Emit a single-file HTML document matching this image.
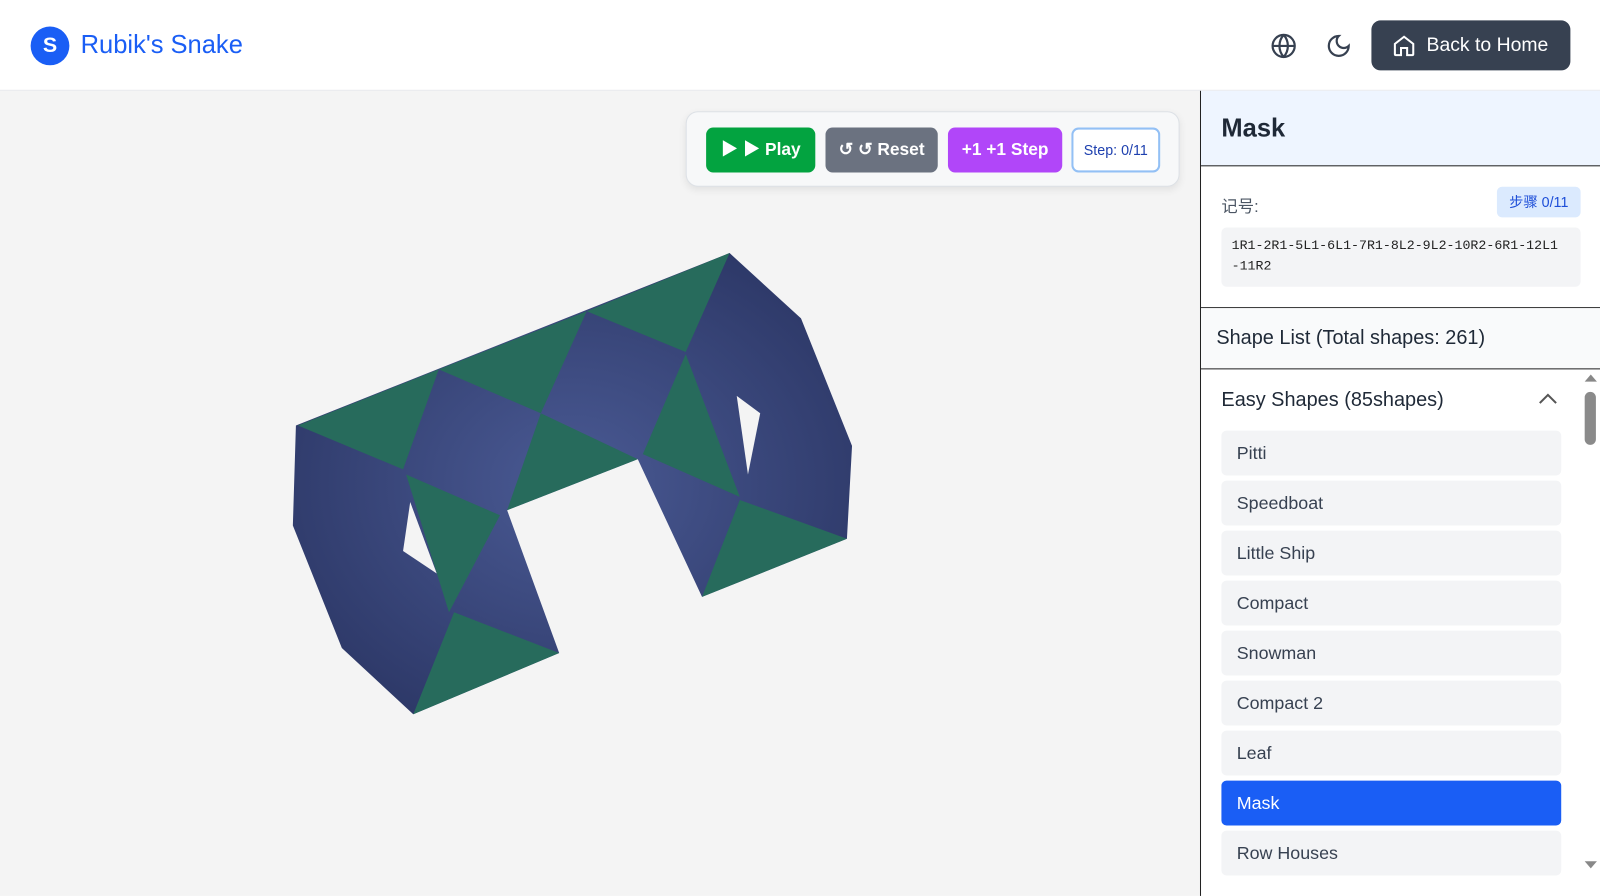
<!DOCTYPE html>
<html><head><meta charset="utf-8"><style>
*{box-sizing:border-box;margin:0;padding:0}
body{width:1600px;height:878px;overflow:hidden;font-family:"Liberation Sans","Noto Sans CJK SC",sans-serif;background:#fff}
#w{position:absolute;left:0;top:0;width:1568px;height:861px;transform:scale(1.0204);transform-origin:0 0}
.hdr{position:absolute;left:0;top:0;width:1568px;height:89px;background:#fff;border-bottom:1px solid #e5e7eb}
.logo{position:absolute;left:30px;top:26px;width:38px;height:38px;border-radius:50%;background:#1a5ef5;color:#fff;font-weight:bold;font-size:21px;text-align:center;line-height:38px}
.title{position:absolute;left:79px;top:30px;font-size:25px;color:#1a5ef5}
.home{position:absolute;left:1344px;top:20px;width:195px;height:49px;background:#374151;border-radius:9px;color:#fff;font-size:19px;line-height:49px;padding-left:54px}
.main{position:absolute;left:0;top:89px;width:1176px;height:789px;background:#f4f4f4}
.ctl{position:absolute;left:672px;top:109px;width:484px;height:74px;background:#f7f8f9;border:1px solid #dde1e6;border-radius:12px;box-shadow:0 3px 8px rgba(0,0,0,.08)}
.b{position:absolute;top:15px;height:44px;border-radius:7px;color:#fff;font-weight:bold;font-size:17px;line-height:44px;text-align:center}
.side{position:absolute;left:1176px;top:89px;width:392px;height:789px;border-left:1.5px solid #222;background:#fff}
.sec{position:absolute;left:0;width:392px}
.item{position:absolute;left:20px;width:333px;height:44px;border-radius:5px;background:#f3f4f6;color:#374151;font-size:17.5px;line-height:44px;padding-left:15px}
</style></head><body><div id="w">
<div class="hdr">
<div class="logo">S</div><div class="title">Rubik's Snake</div>
<svg style="position:absolute;left:1245px;top:32px" width="26" height="26" viewBox="0 0 24 24" fill="none" stroke="#374151" stroke-width="2"><circle cx="12" cy="12" r="10"/><path d="M2 12h20M12 2a15 15 0 0 1 0 20M12 2a15 15 0 0 0 0 20"/></svg>
<svg style="position:absolute;left:1299px;top:32px" width="26" height="26" viewBox="0 0 24 24" fill="none" stroke="#374151" stroke-width="2"><path d="M12 3a6 6 0 0 0 9 9 9 9 0 1 1-9-9z"/></svg>
<div class="home"><svg style="position:absolute;left:20px;top:13px" width="24" height="24" viewBox="0 0 24 24" fill="none" stroke="#fff" stroke-width="2"><path d="M3 10l9-7 9 7v10a1 1 0 0 1-1 1h-5v-7h-6v7H4a1 1 0 0 1-1-1z"/></svg>Back to Home</div>
</div>
<div class="main"></div>
<svg style="position:absolute;left:0;top:89px" width="1176" height="789" viewBox="0 89 1176 789">
<defs><radialGradient id="g1" cx="50%" cy="50%" r="60%"><stop offset="0" stop-color="#4a5a94"/><stop offset="1" stop-color="#2c3766"/></radialGradient></defs>
<polygon fill="url(#g1)" points="290,417 715,248 785,312 835,437 830,528 688,585 625,450 497,500 548,640 405,700 335,635 287,515"/>
<g fill="#276b5c">
<polygon points="292,417 430,362 395,460"/>
<polygon points="430,362 575,305 530,405"/>
<polygon points="575,305 715,248 672,345"/>
<polygon points="530,405 625,450 497,500"/>
<polygon points="672,347 725,487 630,445"/>
<polygon points="398,465 490,505 440,600"/>
<polygon points="445,600 548,640 405,700"/>
<polygon points="725,490 830,528 688,585"/>
</g>
<polygon fill="#f4f4f4" points="402,492 395,540 428,562"/>
<polygon fill="#f4f4f4" points="722,388 745,405 733,465"/>
</svg>
<div class="ctl">
<div class="b" style="left:19px;width:107px;background:#03a340">▶ ▶ Play</div>
<div class="b" style="left:136px;width:110px;background:#6b7280">↺ ↺ Reset</div>
<div class="b" style="left:256px;width:112px;background:#b146f9">+1 +1 Step</div>
<div class="b" style="left:377px;width:87px;background:#fff;border:2px solid #93c0f5;color:#1e40af;font-size:14px;line-height:40px;font-weight:normal">Step: 0/11</div>
</div>
<div class="side">
<div class="sec" style="top:0;height:74px;background:#eef5ff;border-bottom:1.5px solid #222"><div style="position:absolute;left:20px;top:23px;font-size:25px;font-weight:bold;color:#1f2937">Mask</div></div>
<div class="sec" style="top:74px;height:139px;border-bottom:1.5px solid #222">
<div style="position:absolute;left:20px;top:26px;font-size:16px;color:#4b5563">记号:</div>
<div style="position:absolute;left:290px;top:20px;width:82px;height:30px;background:#dbeafe;border-radius:5px;color:#1d4ed8;font-size:14px;line-height:30px;text-align:center">步骤 0/11</div>
<div style="position:absolute;left:20px;top:60px;width:352px;height:58px;background:#f3f4f6;border-radius:5px;font-family:'Liberation Mono',monospace;font-size:13px;color:#222;padding:8px 0 8px 10px;line-height:20px;white-space:nowrap;overflow:hidden">1R1-2R1-5L1-6L1-7R1-8L2-9L2-10R2-6R1-12L1<br>-11R2</div>
</div>
<div class="sec" style="top:213px;height:60px;background:#f9fafb;border-bottom:1.5px solid #222"><div style="position:absolute;left:15px;top:18px;font-size:19.5px;color:#1f2937">Shape List (Total shapes: 261)</div></div>
<div class="sec" style="top:273px;height:516px">
<div style="position:absolute;left:20px;top:19px;font-size:19.5px;color:#1f2937">Easy Shapes (85shapes)</div>
<svg style="position:absolute;left:330px;top:22px" width="20" height="14" viewBox="0 0 20 14" fill="none" stroke="#555" stroke-width="2"><path d="M2 11l8-8 8 8"/></svg>
<div style="position:absolute;left:376px;top:22px;width:11px;height:52px;background:#8a8a8a;border-radius:6px"></div>
<div style="position:absolute;left:376px;top:5px;width:0;height:0;border-left:6px solid transparent;border-right:6px solid transparent;border-bottom:7px solid #888"></div>
<div style="position:absolute;left:376px;top:482px;width:0;height:0;border-left:6px solid transparent;border-right:6px solid transparent;border-top:7px solid #888"></div>
<div class="item" style="top:60px">Pitti</div>
<div class="item" style="top:109px">Speedboat</div>
<div class="item" style="top:158px">Little Ship</div>
<div class="item" style="top:207px">Compact</div>
<div class="item" style="top:256px">Snowman</div>
<div class="item" style="top:305px">Compact 2</div>
<div class="item" style="top:354px">Leaf</div>
<div class="item" style="top:403px;background:#1a5ef5;color:#fff">Mask</div>
<div class="item" style="top:452px">Row Houses</div>
</div>
</div>
</div></body></html>
